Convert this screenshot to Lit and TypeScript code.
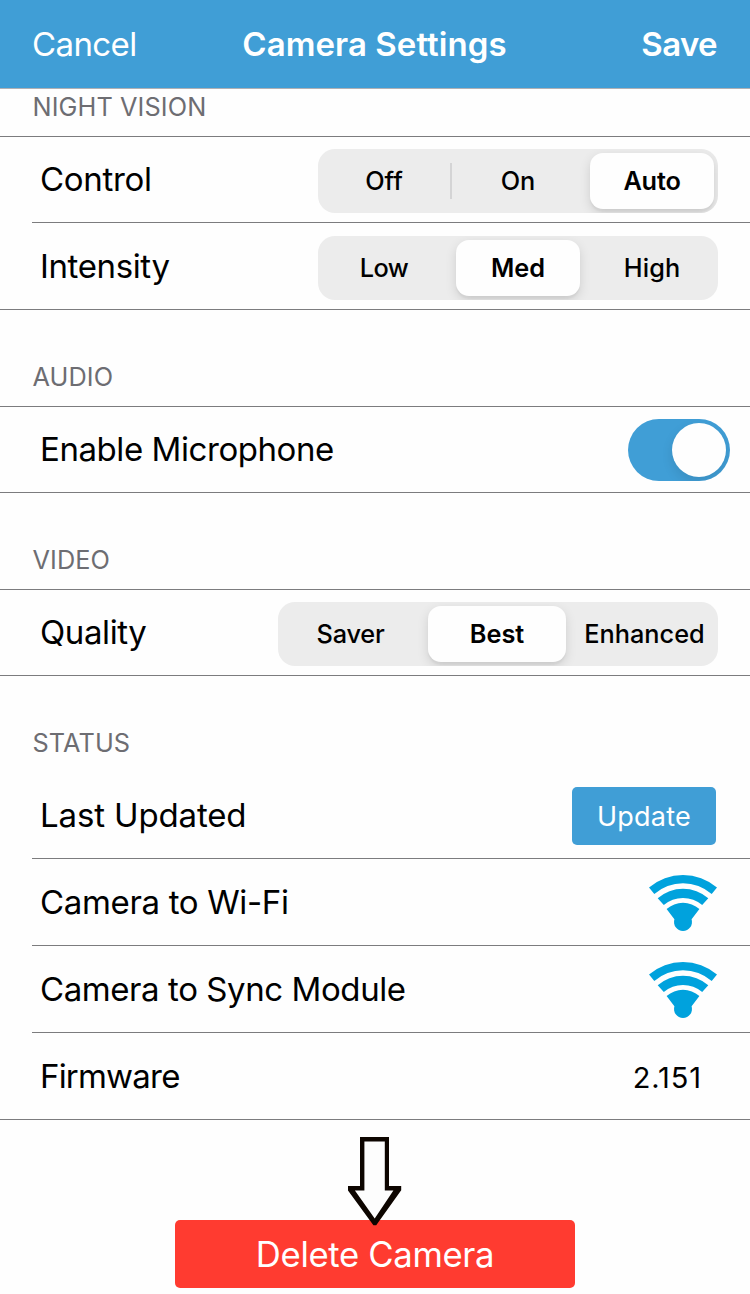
import { LitElement, html, css, svg } from "lit";
import { customElement, property } from "lit/decorators.js";
import { classMap } from "lit/directives/class-map.js";
import { styleMap } from "lit/directives/style-map.js";

interface Segment {
  label: string;
  tracking?: number;
}

@customElement("segmented-control")
class SegmentedControl extends LitElement {
  @property({ attribute: false }) segments: Segment[] = [];
  @property({ type: Number }) selected = 0;
  @property({ type: Boolean, reflect: true }) wide = false;

  static styles = css`
    :host {
      display: grid;
      box-sizing: border-box;
      grid-template-columns: repeat(3, 124px);
      column-gap: 10px;
      width: 400px;
      height: 64px;
      padding: 4px;
      border-radius: 17px;
      background: #ececec;
      overflow: hidden;
    }
    :host([wide]) {
      width: 440px;
      grid-template-columns: 137px 138px 139px;
      column-gap: 9px;
    }
    .segment {
      position: relative;
      display: flex;
      align-items: center;
      justify-content: center;
      box-sizing: border-box;
      padding-bottom: 2px;
      border-radius: 13px;
      font-size: 25.3px;
      font-weight: 450;
      color: #000;
      white-space: nowrap;
    }
    .selected {
      background: #fefefe;
      font-weight: 570;
      box-shadow: 0 4px 12px rgba(0, 0, 0, 0.12), 0 3px 2px rgba(0, 0, 0, 0.04);
    }
    .divided::after {
      content: "";
      position: absolute;
      right: -6px;
      top: 10px;
      bottom: 10px;
      width: 2px;
      background: #d4d4d5;
    }
  `;

  render() {
    return this.segments.map((s, i) => {
      const last = i === this.segments.length - 1;
      const divided = !last && i !== this.selected && i + 1 !== this.selected;
      return html`<div
        class=${classMap({ segment: true, selected: i === this.selected, divided })}
        style=${styleMap({ letterSpacing: `${s.tracking ?? 0}px` })}
      >${s.label}</div>`;
    });
  }
}

@customElement("wifi-icon")
class WifiIcon extends LitElement {
  static styles = css`
    :host {
      display: block;
      width: 68px;
      height: 56px;
    }
    .icon {
      display: block;
      fill: #00a2dd;
    }
  `;

  render() {
    return html`<svg class="icon" width="68" height="56" viewBox="0 0 68 56">
      ${svg`
        <path d="M0 12.5A52.5 52.5 0 0 1 68 12.5L62.7 19A43.5 43.5 0 0 0 5.3 19Z" />
        <path d="M8.7 23.3A38.5 38.5 0 0 1 59.3 23.3L53.2 30A29.5 29.5 0 0 0 14.8 30Z" />
        <path d="M17.6 34A24.8 24.8 0 0 1 50.4 34L42.6 44.3A9 9 0 1 1 25.4 44.3Z" />
      `}
    </svg>`;
  }
}

@customElement("settings-row")
class SettingsRow extends LitElement {
  @property() label = "";
  @property({ type: Number }) tracking = 0;

  static styles = css`
    :host {
      display: flex;
      box-sizing: content-box;
      align-items: center;
      justify-content: space-between;
      height: 86px;
      padding: 0 32px 0 40px;
      border-bottom: 1px solid #7c7c7e;
    }
    :host([short]) {
      height: 85px;
    }
    :host([short]) .label {
      margin-bottom: 1px;
    }
    :host([inset]) {
      margin-left: 32px;
      padding-left: 8px;
    }
    .label {
      font-size: 33px;
      line-height: 44px;
      color: #000;
      white-space: nowrap;
    }
  `;

  render() {
    return html`<div class="label" style=${styleMap({ letterSpacing: `${this.tracking}px` })}>${this.label}</div>
      <slot></slot>`;
  }
}

@customElement("app-root")
class AppRoot extends LitElement {
  static styles = css`
    :host {
      display: flex;
      flex-direction: column;
      box-sizing: border-box;
      width: 750px;
      height: 1294px;
      overflow: hidden;
      background: #fefefe;
      font-family: Inter, "Liberation Sans", sans-serif;
    }
    .bar {
      display: grid;
      grid-template-columns: 1fr auto 1fr;
      align-items: center;
      height: 88px;
      padding: 0 33px 0 32px;
      border-bottom: 1px solid #b0b0b4;
      background: #409ed6;
      color: #fff;
      font-size: 33px;
      line-height: 44px;
    }
    .cancel {
      letter-spacing: -0.6px;
    }
    .title {
      font-weight: 600;
      letter-spacing: 0.07px;
    }
    .save {
      justify-self: end;
      font-weight: 600;
      letter-spacing: -0.6px;
    }
    .heading {
      display: flex;
      align-items: flex-end;
      box-sizing: border-box;
      height: 97px;
      padding: 0 32px 14px 32.5px;
      border-bottom: 1px solid #7c7c7e;
      font-size: 25.3px;
      line-height: 30px;
      letter-spacing: 0.1px;
      color: #6d6d72;
    }
    .first {
      height: 48px;
    }
    .open {
      height: 96px;
      border-bottom: none;
    }
    .top-12 {
      align-self: flex-start;
      margin-top: 12px;
    }
    .top-13 {
      align-self: flex-start;
      margin-top: 13px;
    }
    .toggle {
      display: flex;
      justify-content: flex-end;
      box-sizing: border-box;
      width: 102px;
      height: 62px;
      padding: 4px;
      margin-right: -12px;
      border-radius: 31px;
      background: #409ed6;
      overflow: hidden;
    }
    .knob {
      width: 54px;
      height: 54px;
      border-radius: 50%;
      background: #fefefe;
      box-shadow: 0 5px 12px rgba(0, 0, 0, 0.1);
    }
    .update {
      display: flex;
      align-items: center;
      justify-content: center;
      align-self: flex-start;
      width: 144px;
      height: 58px;
      margin: 15px 2px 0 0;
      border-radius: 5px;
      background: #409ed6;
      color: #fff;
      font-size: 27px;
      letter-spacing: 0.2px;
    }
    .signal {
      align-self: flex-start;
      margin: 16px 1px 0 0;
    }
    .version {
      margin: 3px 16px 0 0;
      font-size: 29px;
      letter-spacing: 0.9px;
      color: #000;
    }
    .footer {
      display: flex;
      flex-direction: column;
      align-items: center;
      padding-top: 17px;
    }
    .arrow {
      position: relative;
      display: block;
      margin-bottom: -6px;
    }
    .delete {
      display: flex;
      align-items: center;
      justify-content: center;
      width: 400px;
      height: 68px;
      border-radius: 5px;
      background: #ff3b30;
      color: #fff;
      font-size: 34.7px;
      letter-spacing: -0.35px;
    }
  `;

  render() {
    return html`
      <div class="bar">
        <div class="cancel">Cancel</div>
        <div class="title">Camera Settings</div>
        <div class="save">Save</div>
      </div>

      <div class="heading first">NIGHT VISION</div>
      <settings-row label="Control" tracking="-0.3" short inset>
        <segmented-control
          class="top-12"
          .segments=${[{ label: "Off" }, { label: "On" }, { label: "Auto", tracking: -0.2 }]}
          .selected=${2}
        ></segmented-control>
      </settings-row>
      <settings-row label="Intensity" tracking="-0.38">
        <segmented-control
          class="top-13"
          .segments=${[{ label: "Low", tracking: -0.5 }, { label: "Med" }, { label: "High", tracking: 0.1 }]}
          .selected=${1}
        ></segmented-control>
      </settings-row>

      <div class="heading">AUDIO</div>
      <settings-row label="Enable Microphone" tracking="-0.43" short>
        <div class="toggle top-12"><div class="knob"></div></div>
      </settings-row>

      <div class="heading">VIDEO</div>
      <settings-row label="Quality" tracking="-0.4" short>
        <segmented-control
          wide
          class="top-12"
          .segments=${[{ label: "Saver", tracking: -0.2 }, { label: "Best" }, { label: "Enhanced" }]}
          .selected=${1}
        ></segmented-control>
      </settings-row>

      <div class="heading open">STATUS</div>
      <settings-row label="Last Updated" tracking="-0.14" inset>
        <div class="update">Update</div>
      </settings-row>
      <settings-row label="Camera to Wi-Fi" tracking="-0.34" inset>
        <wifi-icon class="signal"></wifi-icon>
      </settings-row>
      <settings-row label="Camera to Sync Module" tracking="-0.42" inset>
        <wifi-icon class="signal"></wifi-icon>
      </settings-row>
      <settings-row label="Firmware" tracking="-0.8">
        <div class="version">2.151</div>
      </settings-row>

      <div class="footer">
        <svg class="arrow" width="54" height="89" viewBox="0 0 54 89">
          <path fill="#0d0500" d="M12 0H41V49H53.2V53.2L28.2 88.3H25.4L0 53.4V49H12Z" />
          <path fill="#fdfdfd" d="M16.4 4.6H36.8V53.6H45.4L26.7 81.4L6.9 53.6H16.4Z" />
        </svg>
        <div class="delete">Delete Camera</div>
      </div>
    `;
  }
}
